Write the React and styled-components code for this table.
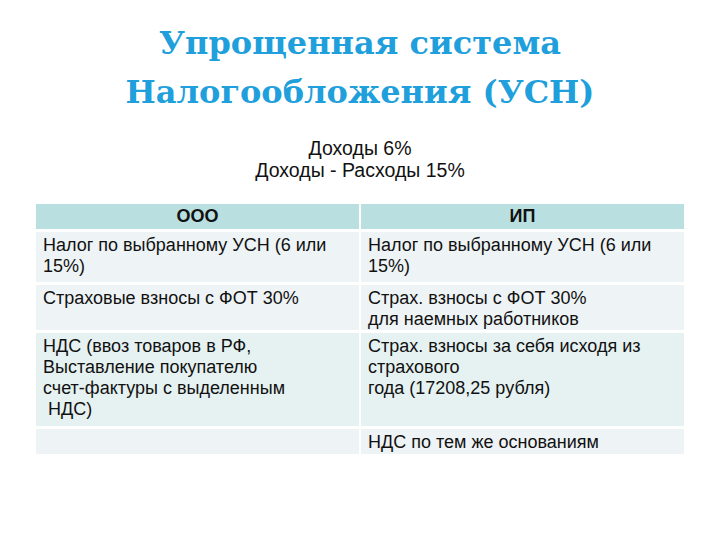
import React from "react";
import styled, { createGlobalStyle } from "styled-components";

const GlobalStyle = createGlobalStyle`
	html, body {
		margin: 0;
		padding: 0;
		background: #fff;
	}
	body {
		width: 720px;
		height: 540px;
		overflow: hidden;
	}
`;

const Slide = styled.div`
	width: 720px;
	height: 540px;
	display: flex;
	flex-direction: column;
	align-items: center;
	background: #fff;
`;

const Title = styled.h1`
	margin: 19px 0 0;
	font-family: "DejaVu Serif", "Liberation Serif", serif;
	font-weight: bold;
	font-size: 32px;
	line-height: 49px;
	color: #1f9fdb;
	text-align: center;
`;

const Subtitle = styled.div`
	margin-top: 20px;
	font-family: "Liberation Sans", Arial, sans-serif;
	font-size: 19.5px;
	line-height: 22px;
	color: #111;
	text-align: center;
`;

const Table = styled.div`
	margin-top: 23px;
	width: 648px;
	display: grid;
	grid-template-columns: 323px 323px;
	grid-template-rows: 25px 50px 45px 93px 25px;
	column-gap: 2px;
	row-gap: 3px;
	font-family: "Liberation Sans", Arial, sans-serif;
	font-size: 18px;
	line-height: 21px;
	color: #111;
`;

const HeadCell = styled.div`
	background: #b9dfe0;
	padding: 2px 7px;
	font-weight: bold;
	text-align: center;
`;

const Cell = styled.div`
	background: ${props => (props.band ? "#e6f1f2" : "#eef3f6")};
	padding: 3px 7px 0;
	white-space: pre-wrap;
	overflow: hidden;
`;

const rows = [
	{ band: false, left: "Налог по выбранному УСН (6 или\n15%)", right: "Налог по выбранному УСН (6 или\n15%)" },
	{ band: false, left: "Страховые взносы с ФОТ 30%", right: "Страх. взносы с ФОТ 30%\nдля наемных работников" },
	{ band: true, left: "НДС (ввоз товаров в РФ,\nВыставление покупателю\nсчет-фактуры с выделенным\n НДС)", right: "Страх. взносы за себя исходя из\nстрахового\nгода (17208,25 рубля)" },
	{ band: false, left: "", right: "НДС по тем же основаниям" },
];

export default function App() {
	return (
		<Slide>
			<GlobalStyle />
			<Title>
				Упрощенная система
				<br />
				Налогообложения (УСН)
			</Title>
			<Subtitle>
				Доходы 6%
				<br />
				Доходы - Расходы 15%
			</Subtitle>
			<Table>
				<HeadCell>ООО</HeadCell>
				<HeadCell>ИП</HeadCell>
				{rows.map((row, i) => (
					<React.Fragment key={i}>
						<Cell band={row.band}>{row.left}</Cell>
						<Cell band={row.band}>{row.right}</Cell>
					</React.Fragment>
				))}
			</Table>
		</Slide>
	);
}
